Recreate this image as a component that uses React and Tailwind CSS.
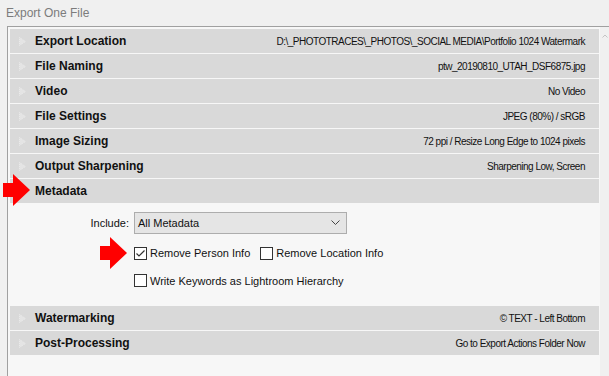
const ROWS_TOP = [
  { label: 'Export Location', value: 'D:\\_PHOTOTRACES\\_PHOTOS\\_SOCIAL MEDIA\\Portfolio 1024 Watermark' },
  { label: 'File Naming', value: 'ptw_20190810_UTAH_DSF6875.jpg' },
  { label: 'Video', value: 'No Video' },
  { label: 'File Settings', value: 'JPEG (80%) / sRGB' },
  { label: 'Image Sizing', value: '72 ppi / Resize Long Edge to 1024 pixels' },
  { label: 'Output Sharpening', value: 'Sharpening Low, Screen' },
]

const ROWS_BOTTOM = [
  { label: 'Watermarking', value: '© TEXT - Left Bottom' },
  { label: 'Post-Processing', value: 'Go to Export Actions Folder Now' },
]

function Triangle() {
  return (
    <svg width="7" height="9" viewBox="0 0 7 9" className="shrink-0">
      <path d="M0.5 0.5 L6.5 4.5 L0.5 8.5 Z" fill="#e4e4e4" stroke="#ebebeb" strokeWidth="1" strokeDasharray="1 1" />
    </svg>
  )
}

function RedArrow({ className }) {
  return (
    <svg width="28" height="32" viewBox="0 0 28 32" className={className}>
      <path d="M0 9 H10 V0 L27 16 L10 32 V23 H0 Z" fill="#ff0000" />
    </svg>
  )
}

function SectionRow({ label, value, hideIcon }) {
  return (
    <div className="h-[24px] bg-[#d9d9d9] flex items-center pl-[9px] pr-[14px]">
      <span className={hideIcon ? 'invisible' : ''}><Triangle /></span>
      <span className="ml-[9px] text-[12px] font-bold text-[#111]">{label}</span>
      {value && (
        <span className="ml-auto text-[10px] tracking-[-0.5px] text-[#111]">{value}</span>
      )}
    </div>
  )
}

function Checkbox({ checked, label }) {
  return (
    <div className="flex items-center gap-[3px]">
      <span className="w-[13px] h-[13px] border border-[#333] bg-white flex items-center justify-center">
        {checked && (
          <svg width="11" height="11" viewBox="0 0 11 11">
            <path d="M1.5 5.5 L4 8 L9.5 2.5" fill="none" stroke="#333" strokeWidth="1.2" />
          </svg>
        )}
      </span>
      <span className="text-[11px] text-[#111]">{label}</span>
    </div>
  )
}

export default function App() {
  return (
    <div className="w-[609px] h-[376px] bg-[#f0f0f0] overflow-hidden relative" style={{ fontFamily: '"Liberation Sans", Arial, sans-serif' }}>
      <div className="h-[26px] pl-[6px] flex items-center text-[12px] text-[#7c7c7c]">Export One File</div>

      <div className="ml-[7px] h-[350px] flex border-t border-l border-[#a0a0a0]">
        <div className="flex-1 bg-[#f7f7f7] pt-[2px] pl-[2px] pr-[1px] flex flex-col gap-px">
          {ROWS_TOP.map(r => <SectionRow key={r.label} {...r} />)}
          <SectionRow label="Metadata" hideIcon />

          <div className="h-[101px] pt-[8px]">
            <div className="flex items-center">
              <span className="w-[124px] pr-[5px] text-right text-[11px] text-[#111]">Include:</span>
              <div className="w-[213px] h-[22px] bg-[#e5e5e5] border border-[#adadad] flex items-center pl-[3px] pr-[6px]">
                <span className="text-[11px] text-[#111]">All Metadata</span>
                <svg width="9" height="6" viewBox="0 0 9 6" className="ml-auto">
                  <path d="M0.5 0.5 L4.5 4.5 L8.5 0.5" fill="none" stroke="#444" strokeWidth="1" />
                </svg>
              </div>
            </div>
            <div className="pl-[124px] mt-[11px] flex flex-col gap-[11px]">
              <div className="flex items-center gap-[10px]">
                <Checkbox checked label="Remove Person Info" />
                <Checkbox label="Remove Location Info" />
              </div>
              <Checkbox label="Write Keywords as Lightroom Hierarchy" />
            </div>
          </div>

          {ROWS_BOTTOM.map(r => <SectionRow key={r.label} {...r} />)}
        </div>

        <div className="w-[9px] bg-[#f0f0f0] pt-[7px] flex justify-center">
          <svg width="6" height="4" viewBox="0 0 6 4">
            <path d="M0.5 3.5 L3 1 L5.5 3.5" fill="none" stroke="#c4c4c4" strokeWidth="1" />
          </svg>
        </div>
      </div>

      <RedArrow className="absolute left-[3px] top-[174px]" />
      <RedArrow className="absolute left-[100px] top-[237px]" />
    </div>
  )
}
